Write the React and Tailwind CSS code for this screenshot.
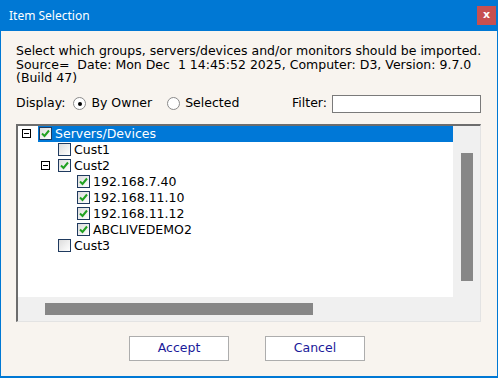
import React from "react";

const font = { fontFamily: '"DejaVu Sans", Verdana, sans-serif' };

function Check({ checked }) {
  return (
    <div className="w-[13px] h-[13px] border border-[#1f3a5f] bg-gradient-to-br from-[#dcdcdc] to-white flex items-center justify-center shrink-0">
      {checked && (
        <svg width="9" height="9" viewBox="0 0 9 9">
          <path d="M1 4.5 L3.5 7 L8 1.5" stroke="#21a121" strokeWidth="2" fill="none" />
        </svg>
      )}
    </div>
  );
}

function Expander() {
  return (
    <div className="w-[9px] h-[9px] border border-black bg-white flex items-center justify-center shrink-0">
      <div className="w-[5px] h-[1px] bg-black" />
    </div>
  );
}

function Row({ level, label, checked, expander, selected }) {
  return (
    <div className="h-[16px] flex items-center relative">
      <div style={{ width: 4 + level * 19 }} className="shrink-0" />
      <div className="w-[16px] shrink-0 flex items-center">{expander && <Expander />}</div>
      <div className={`flex items-center h-[16px] ${selected ? "bg-[#0078d7] flex-1 text-white" : "text-black"}`}>
        <div className="w-[1px]" />
        <Check checked={checked} />
        <span className="pl-[3px] text-[12.5px] leading-[16px] whitespace-nowrap">{label}</span>
      </div>
    </div>
  );
}

export default function App() {
  return (
    <div className="w-[498px] h-[378px] bg-[#0078d4] flex flex-col" style={font}>
      <div className="h-[31px] flex items-center justify-between shrink-0">
        <span className="pl-[9px] text-white text-[12px]" style={{ fontFamily: '"Noto Sans", "Open Sans", sans-serif' }}>
          Item Selection
        </span>
        <div className="w-[19px] h-[19px] bg-[#c75050] mr-[2px] flex items-center justify-center text-white text-[11px] font-bold leading-none pb-[2px]">
          x
        </div>
      </div>
      <div className="flex-1 mx-[1px] mb-[2px] bg-[#f8f4ef] flex flex-col pl-[15px] pr-[16px] pt-[13px]">
        <div className="text-[12.5px] leading-[13.6px] text-black whitespace-nowrap">
          <div>Select which groups, servers/devices and/or monitors should be imported.</div>
          <div>Source=&nbsp; Date: Mon Dec&nbsp; 1 14:45:52 2025, Computer: D3, Version: 9.7.0</div>
          <div>(Build 47)</div>
        </div>
        <div className="flex items-center h-[18px] mt-[10px] text-[12.5px] text-black">
          <span>Display:</span>
          <div className="ml-[8px] w-[13px] h-[13px] rounded-full border border-[#8a8a8a] bg-white flex items-center justify-center">
            <div className="w-[4px] h-[4px] rounded-full bg-black" />
          </div>
          <span className="ml-[5px]">By Owner</span>
          <div className="ml-[15px] w-[13px] h-[13px] rounded-full border border-[#8a8a8a] bg-white" />
          <span className="ml-[5px]">Selected</span>
          <span className="ml-auto mr-[5px]">Filter:</span>
          <div className="w-[149px] h-[18px] border border-[#7a7a7a] bg-white" />
        </div>
        <div className="mt-[11px] h-[198px] border-t-2 border-l-2 border-t-[#6d6d6d] border-l-[#6d6d6d] border-r border-b border-r-[#e3e3e3] border-b-[#e3e3e3] flex flex-col bg-[#f0f0f0]">
          <div className="flex h-[171px]">
            <div className="flex-1 bg-white pt-0">
              <Row level={0} label="Servers/Devices" checked expander selected />
              <Row level={1} label="Cust1" />
              <Row level={1} label="Cust2" checked expander />
              <Row level={2} label="192.168.7.40" checked />
              <Row level={2} label="192.168.11.10" checked />
              <Row level={2} label="192.168.11.12" checked />
              <Row level={2} label="ABCLIVEDEMO2" checked />
              <Row level={1} label="Cust3" />
            </div>
            <div className="w-[27px] shrink-0 pl-[8px] pt-[27px]">
              <div className="w-[12px] h-[128px] bg-[#878787]" />
            </div>
          </div>
          <div className="flex-1 pl-[27px] pt-[6px]">
            <div className="w-[268px] h-[12px] bg-[#878787]" />
          </div>
        </div>
        <div className="flex gap-[36px] mt-[14px] pl-[113px]">
          <button className="w-[100px] h-[25px] bg-white border border-[#adadad] text-[#1a1a9a] text-[12.5px]">Accept</button>
          <button className="w-[100px] h-[25px] bg-white border border-[#adadad] text-[#1a1a9a] text-[12.5px]">Cancel</button>
        </div>
      </div>
    </div>
  );
}
